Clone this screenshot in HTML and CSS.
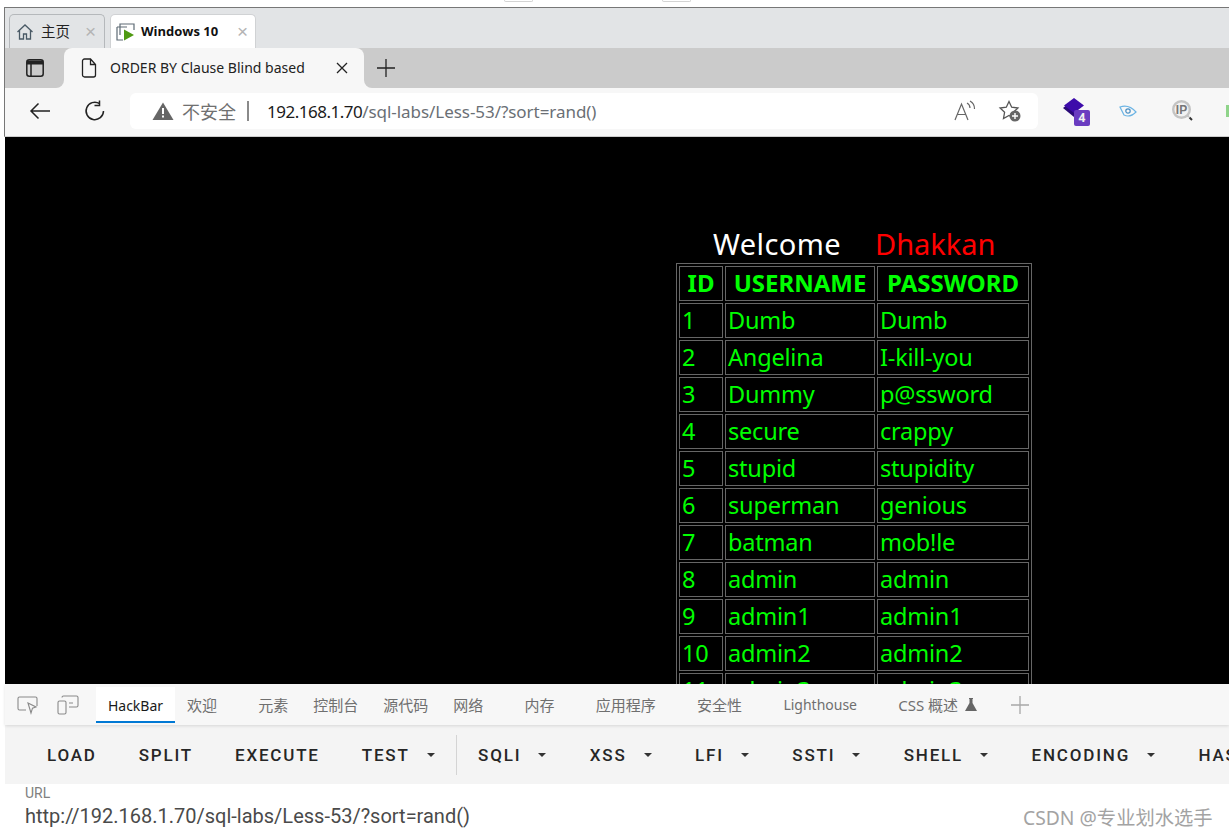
FILE: index.html
```html
<!DOCTYPE html>
<html lang="zh">
<head>
<meta charset="utf-8">
<title>ORDER BY Clause Blind based</title>
<link rel="stylesheet" href="styles.css">
</head>
<body>
<div class="screen">
  <div class="topstrip"><span class="chip"></span><span class="chip"></span></div>
  <div class="vm-tabs">
    <div class="vm-tab vm-home">
      <svg class="vm-ico" width="18" height="18" viewBox="0 0 18 18" fill="none" stroke="#4a5a66" stroke-width="1.3"><path d="M1.5 9 9 2l7.5 7M3.5 7.5V16h4v-5h3v5h4V7.5"/></svg>
      <span class="vm-home-label">主页</span>
      <span class="vm-x">×</span>
    </div>
    <div class="vm-tab vm-win">
      <svg class="vm-ico" width="20" height="20" viewBox="0 0 20 20" fill="none"><path d="M4 13V2h14v6" stroke="#5e6b75" stroke-width="1.2"/><path d="M1 5h10M1 5v13h6" stroke="#5e6b75" stroke-width="1.2"/><path d="M8 7.500v11l10-5.500z" fill="#4f9a12"/></svg>
      <span class="vm-win-label">Windows 10</span>
      <span class="vm-x">×</span>
    </div>
  </div>
  <div class="tabstrip">
    <div class="tabstrip-btn">
      <svg width="18" height="18" viewBox="0 0 18 18" fill="none" stroke="#222" stroke-width="1.500"><rect x=".8" y=".8" width="16.400" height="16.400" rx="2.500"/><path d="M.8 3.500h16.400" stroke-width="4"/><path d="M5 5v12"/></svg>
    </div>
    <div class="tab-active">
      <svg class="page-ico" width="16" height="20" viewBox="0 0 16 20" fill="none" stroke="#222" stroke-width="1.300"><path d="M1.500 3a2 2 0 0 1 2-2h6l5 5.500V17a2 2 0 0 1-2 2h-9a2 2 0 0 1-2-2zM9.500 1v5.500h5"/></svg>
      <span class="tab-title">ORDER BY Clause Blind based</span>
      <svg width="12" height="12" viewBox="0 0 12 12" stroke="#222" stroke-width="1.300"><path d="M1 1l10 10M11 1 1 11"/></svg>
    </div>
    <div class="tabstrip-rest">
      <svg class="newtab" width="18" height="18" viewBox="0 0 18 18" stroke="#222" stroke-width="1.300"><path d="M9 0v18M0 9h18"/></svg>
    </div>
  </div>
  <div class="toolbar">
    <svg class="nav-back" width="22" height="18" viewBox="0 0 22 18" fill="none" stroke="#222" stroke-width="1.500"><path d="M21 9H2M9.500 1.500 2 9l7.500 7.500"/></svg>
    <svg class="nav-reload" width="22" height="22" viewBox="0 0 22 22" fill="none" stroke="#222" stroke-width="1.500"><path d="M19.500 11A8.700 8.700 0 1 1 15.500 3.600M15.500 .5v5h-5" /></svg>
    <div class="omnibox">
      <svg class="warn" width="22" height="18" viewBox="0 0 22 18"><path d="M11 .5 21.500 18H.5z" fill="#666"/><path d="M10 6h2v6h-2zM10 13.500h2v2h-2z" fill="#fff"/></svg>
      <span class="insecure">不安全</span>
      <span class="sep"></span>
      <span class="url"><span class="url-host">192.168.1.70</span>/sql-labs/Less-53/?sort=rand()</span>
      <span class="omni-fill"></span>
      <svg class="readaloud" width="22" height="22" viewBox="0 0 22 22" fill="none" stroke="#666" stroke-width="1.200"><path d="M1 20 7.500 4 14 20M3.500 14.500h8M13 3a6 6 0 0 1 3 5M16 1a9 9 0 0 1 4.500 8"/></svg>
      <svg class="favadd" width="24" height="24" viewBox="0 0 24 24" fill="none"><path d="M11 2.500l2.700 5.700 6.200.8-4.500 4.300 1.100 6.200-5.500-3-5.500 3 1.100-6.200L2.100 9l6.200-.8z" stroke="#555" stroke-width="1.300"/><circle cx="17" cy="17" r="5.500" fill="#666"/><path d="M17 14v6M14 17h6" stroke="#fff" stroke-width="1.400"/></svg>
    </div>
    <div class="ext ext-stack">
      <svg width="24" height="24" viewBox="0 0 24 24"><path d="M1 11l5-4 6 4 5 4-5 5z" fill="#2a0a78"/><path d="M12 1l10 7.500L12 16 2 8.500z" fill="#3d0caa"/></svg>
      <span class="ext-badge">4</span>
    </div>
    <svg class="ext ext-eye" width="18" height="14" viewBox="0 0 18 14" fill="none" stroke="#6cb4e4" stroke-width="1.200"><path d="M1 3q9-3 16 5-6 6-12 3z"/><circle cx="9" cy="7" r="2.200" stroke="#4a8fc4"/></svg>
    <svg class="ext ext-ip" width="22" height="22" viewBox="0 0 22 22"><circle cx="9.500" cy="9.500" r="8.300" fill="#f2f2f2" stroke="#c4c4c4" stroke-width="2.400"/><path d="M15.500 15.500l1.500 1.500" stroke="#c4c4c4" stroke-width="2"/><path d="M17.500 17.500l2.500 2.500" stroke="#333" stroke-width="2"/><text x="9.500" y="14" class="ext-ip-label">IP</text></svg>
    <span class="ext-sliver"></span>
  </div>
  <main class="page">
    <div class="page-inner">
      <p class="welcome"><span class="w-white">Welcome</span><span class="w-red">Dhakkan</span></p>
      <table class="users">
        <thead><tr><th class="c-id">ID</th><th class="c-user">USERNAME</th><th class="c-pass">PASSWORD</th></tr></thead>
        <tbody>
          <tr><td>1</td><td>Dumb</td><td>Dumb</td></tr>
          <tr><td>2</td><td>Angelina</td><td>I-kill-you</td></tr>
          <tr><td>3</td><td>Dummy</td><td>p@ssword</td></tr>
          <tr><td>4</td><td>secure</td><td>crappy</td></tr>
          <tr><td>5</td><td>stupid</td><td>stupidity</td></tr>
          <tr><td>6</td><td>superman</td><td>genious</td></tr>
          <tr><td>7</td><td>batman</td><td>mob!le</td></tr>
          <tr><td>8</td><td>admin</td><td>admin</td></tr>
          <tr><td>9</td><td>admin1</td><td>admin1</td></tr>
          <tr><td>10</td><td>admin2</td><td>admin2</td></tr>
          <tr><td>11</td><td>admin3</td><td>admin3</td></tr>
        </tbody>
      </table>
    </div>
  </main>
  <section class="devtools">
    <div class="dt-tabs">
      <svg class="dt-ico" width="22" height="20" viewBox="0 0 22 20" fill="none" stroke="#8a8a8a" stroke-width="1.100"><path d="M9 15H2.500a1.500 1.500 0 0 1-1.500-1.500v-10A1.500 1.500 0 0 1 2.500 2h16A1.500 1.500 0 0 1 20 3.500V11"/><path d="M11 8l8 4-3.500 1.200L14 18z"/></svg>
      <svg class="dt-ico dt-ico2" width="22" height="20" viewBox="0 0 22 20" fill="none" stroke="#8a8a8a" stroke-width="1.100"><rect x="1" y="6" width="8" height="13" rx="1.500"/><path d="M5 2.500A1.500 1.500 0 0 1 6.500 1h13A1.500 1.500 0 0 1 21 2.500v8a1.500 1.500 0 0 1-1.500 1.500H12M12 8h4"/></svg>
      <span class="dt-tab dt-current">HackBar</span>
      <span class="dt-tab dt-welcome">欢迎</span>
      <span class="dt-tab dt-wide">元素</span>
      <span class="dt-tab">控制台</span>
      <span class="dt-tab">源代码</span>
      <span class="dt-tab">网络</span>
      <span class="dt-tab dt-wide">内存</span>
      <span class="dt-tab dt-wide">应用程序</span>
      <span class="dt-tab dt-wide">安全性</span>
      <span class="dt-tab dt-wide dt-latin">Lighthouse</span>
      <span class="dt-tab dt-wide">CSS 概述</span>
      <svg class="flask" width="12" height="13" viewBox="0 0 12 13"><path d="M4 0h4v1H7.500v4L12 13H0l4.500-8V1H4z" fill="#666"/></svg>
      <svg class="dt-plus" width="18" height="18" viewBox="0 0 18 18" stroke="#a8a8a8" stroke-width="1.300"><path d="M9 0v18M0 9h18"/></svg>
    </div>
    <div class="hb-bar">
      <span class="hb-btn">LOAD</span>
      <span class="hb-btn">SPLIT</span>
      <span class="hb-btn">EXECUTE</span>
      <span class="hb-btn hb-menu">TEST<i class="caret"></i></span>
      <span class="hb-div"></span>
      <span class="hb-btn hb-menu">SQLI<i class="caret"></i></span>
      <span class="hb-btn hb-menu">XSS<i class="caret"></i></span>
      <span class="hb-btn hb-menu">LFI<i class="caret"></i></span>
      <span class="hb-btn hb-menu">SSTI<i class="caret"></i></span>
      <span class="hb-btn hb-menu">SHELL<i class="caret"></i></span>
      <span class="hb-btn hb-menu">ENCODING<i class="caret"></i></span>
      <span class="hb-btn">HASHING</span>
    </div>
    <div class="hb-url">
      <div class="hb-label">URL</div>
      <div class="hb-value">http://192.168.1.70/sql-labs/Less-53/?sort=rand()</div>
    </div>
  </section>
  <div class="watermark">CSDN @专业划水选手</div>
</div>
</body>
</html>
```
FILE: styles.css
```css
* { box-sizing: border-box; }
html, body { margin: 0; padding: 0; background: #fff; }
body { font-family: "Noto Sans", "Noto Sans CJK SC", sans-serif; }
.screen {
  position: relative;
  width: 1229px;
  height: 838px;
  overflow: hidden;
  padding-left: 4px;
  display: flex;
  flex-direction: column;
}
.topstrip {
  height: 7px;
  flex: none;
  display: flex;
  align-items: flex-start;
  gap: 129px;
  padding-left: 500px;
}
.chip {
  width: 29px;
  height: 2px;
  border: 1px solid #d4d4d4;
  border-top: none;
  border-radius: 0 0 2px 2px;
}
.vm-tabs {
  height: 41px;
  flex: none;
  display: flex;
  align-items: flex-end;
  gap: 5px;
  padding-left: 4px;
  background: #e2e4e6;
  border-top: 1px solid #777;
  border-left: 1px solid #777;
}
.vm-tab {
  height: 34px;
  display: flex;
  align-items: center;
  border-radius: 5px 5px 0 0;
  border: 1px solid #b5b8bb;
  border-bottom: none;
  white-space: nowrap;
}
.vm-home { width: 96px; padding-left: 6px; }
.vm-win { width: 146px; padding-left: 5px; background: #fff; border-color: #d0d2d4; }
.vm-home-label { margin: 0 0 2px 7px; width: 44px; font-size: 14.500px; color: #222; font-family: "Noto Sans CJK SC", sans-serif; }
.vm-win-label { margin: 0 0 2px 5px; width: 96px; font-size: 13px; font-weight: 700; color: #111; font-family: "Open Sans", sans-serif; }
.vm-x { font-size: 19px; line-height: 1; color: #b4b4b4; font-family: "Liberation Sans", sans-serif; }
.tabstrip {
  height: 40px;
  flex: none;
  display: flex;
  align-items: stretch;
  background: linear-gradient(#cbcbcb 50%, #f7f7f7 50%);
  border-left: 1px solid #777;
}
.tabstrip-btn {
  width: 59px;
  display: flex;
  align-items: center;
  padding-left: 21px;
  background: #cbcbcb;
  border-radius: 0 0 8px 0;
}
.tab-active {
  width: 300px;
  display: flex;
  align-items: center;
  padding-left: 17px;
  background: #f7f7f7;
  border-radius: 8px 8px 0 0;
}
.tab-title {
  margin: 0 0 2px 13px;
  width: 226px;
  font-size: 14px;
  color: #222;
  white-space: nowrap;
}
.tabstrip-rest {
  flex: 1;
  display: flex;
  align-items: flex-start;
  padding: 11px 0 0 13px;
  background: #cbcbcb;
  border-radius: 0 0 0 8px;
}
.toolbar {
  height: 49px;
  flex: none;
  display: flex;
  align-items: center;
  background: #f7f7f7;
  border-left: 1px solid #777;
  border-bottom: 1px solid #ccc;
  padding-bottom: 2px;
}
.nav-back { margin-left: 24px; flex: none; }
.nav-reload { margin-left: 33px; flex: none; }
.omnibox {
  margin-left: 24px;
  flex: none;
  width: 908px;
  height: 36px;
  display: flex;
  align-items: center;
  background: #fff;
  border-radius: 6px;
  padding-left: 22px;
}
.insecure { margin-left: 8px; font-size: 18px; color: #707070; font-family: "Noto Sans CJK SC", sans-serif; }
.sep { margin-left: 11px; width: 2px; height: 20px; background: #8a8a8a; }
.url { margin-left: 18px; font-size: 17px; color: #6a6f75; letter-spacing: -.05px; white-space: nowrap; }
.url-host { color: #1b1b1b; letter-spacing: -.5px; }
.omni-fill { flex: 1; }
.readaloud { margin-right: 22px; flex: none; }
.favadd { margin-right: 16px; flex: none; }
.ext { flex: none; }
.ext-stack { position: relative; margin-left: 24px; width: 28px; height: 29px; }
.ext-badge {
  position: absolute;
  right: 0;
  bottom: 0;
  width: 16px;
  height: 16px;
  border-radius: 2px;
  background: #6a3cc0;
  color: #f0f0f0;
  font-size: 12px;
  font-weight: 700;
  line-height: 16px;
  text-align: center;
}
.ext-eye { margin-left: 29px; }
.ext-ip { margin-left: 35px; }
.ext-ip-label { font-family: "Liberation Sans", sans-serif; font-size: 12px; font-weight: 700; fill: #777; text-anchor: middle; }
.ext-sliver { margin-left: 32px; width: 3px; height: 12px; background: #8fd48a; flex: none; }
.page {
  flex: 1;
  min-height: 0;
  overflow: hidden;
  background: #000;
  margin-left: 1px;
  padding-left: 671px;
  padding-top: 87px;
}
.page-inner { width: 356px; }
.welcome {
  margin: 0;
  height: 39px;
  padding-left: 37px;
  display: flex;
  gap: 34px;
  font-size: 29px;
  line-height: 39px;
  white-space: nowrap;
}
.w-white { color: #fff; letter-spacing: .4px; }
.w-red { color: #f00; }
.users {
  width: 356px;
  table-layout: fixed;
  border-collapse: separate;
  border-spacing: 2px;
  border: 1px solid #666;
  color: #0f0;
  font-size: 23.500px;
  letter-spacing: -.2px;
}
.users th, .users td {
  height: 35px;
  padding: 0 1px 0 2px;
  border: 1px solid #666;
  line-height: 33px;
  white-space: nowrap;
}
.users th { font-size: 24px; font-weight: 700; text-align: center; padding: 0 0 2px; line-height: 31px; letter-spacing: 0; }
.c-id { width: 44px; }
.c-user { width: 150px; }
.c-pass { width: 152px; }
.devtools {
  flex: none;
  height: 154px;
  margin-left: 1px;
  display: flex;
  flex-direction: column;
  background: #fff;
}
.dt-tabs {
  height: 41px;
  flex: none;
  display: flex;
  align-items: center;
  padding-left: 12px;
  background: #f7f7f7;
  box-shadow: 0 1px 3px rgba(0, 0, 0, .12);
  position: relative;
}
.dt-ico { flex: none; }
.dt-ico2 { margin-left: 18px; }
.dt-tab {
  font-size: 15px;
  color: #6f6f6f;
  margin-left: 25px;
  white-space: nowrap;
  font-family: "Noto Sans", "Noto Sans CJK SC", sans-serif;
}
.dt-latin { font-size: 14px; }
.dt-current {
  margin-left: 17px;
  width: 79px;
  height: 36px;
  font-size: 14px;
  line-height: 38px;
  text-align: center;
  align-self: flex-start;
  margin-top: 3px;
  background: #fff;
  color: #1a1a1a;
  border-bottom: 2px solid #0078d4;
}
.dt-welcome { margin-left: 12px; }
.dt-wide { margin-left: 41.250px; }
.flask { margin-left: 7px; flex: none; }
.dt-plus { margin-left: 34px; flex: none; }
.hb-bar {
  height: 59px;
  flex: none;
  display: flex;
  align-items: center;
  padding-left: 42px;
  gap: 42px;
  background: #f4f4f4;
  white-space: nowrap;
}
.hb-btn {
  font-family: Roboto, sans-serif;
  font-size: 17px;
  font-weight: 500;
  letter-spacing: 1.800px;
  color: #262626;
  flex: none;
}
.hb-menu { display: flex; align-items: center; }
.caret {
  display: block;
  margin-left: 17px;
  margin-right: 1.500px;
  width: 0;
  height: 0;
  border-left: 4px solid transparent;
  border-right: 4px solid transparent;
  border-top: 4px solid #333;
}
.hb-div { width: 1px; height: 40px; background: #d4d4d4; margin: 0 -21px 0 -22px; flex: none; }
.hb-url { padding: 1px 0 0 20px; font-family: Roboto, sans-serif; }
.hb-label { font-size: 14px; line-height: 16px; color: #808080; }
.hb-value { font-size: 20px; line-height: 30px; color: #4a4a4a; white-space: nowrap; }
.watermark {
  position: absolute;
  left: 1023px;
  top: 806px;
  font-size: 19.300px;
  line-height: 24px;
  color: #a3a3a3;
  font-family: "Noto Sans", "Noto Sans CJK SC", sans-serif;
  white-space: nowrap;
}
```
